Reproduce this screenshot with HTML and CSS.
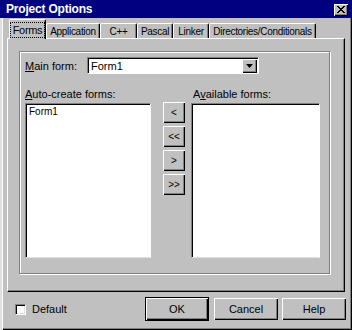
FILE: index.html
```html
<!DOCTYPE html>
<html>
<head>
    <meta charset="UTF-8">
    <title>Project Options</title>
    <link rel="stylesheet" href="styles.css">
</head>
<body>
    <div class="window">
        <div class="titlebar">
            <span class="title">Project Options</span>
            <span class="close">
                <svg width="8" height="7" viewBox="0 0 8 7"><path d="M0 0L7 7M1 0L8 7M7 0L0 7M8 0L1 7" stroke="#000" stroke-width="1"/></svg>
            </span>
        </div>

        <div class="tabs">
            <div class="tab active tab-forms"><span class="focus">Forms</span></div>
            <div class="tab tab-app">Application</div>
            <div class="tab tab-cpp">C++</div>
            <div class="tab tab-pascal">Pascal</div>
            <div class="tab tab-linker">Linker</div>
            <div class="tab tab-dirs">Directories/Conditionals</div>
        </div>

        <div class="panel">
            <div class="group">
                <div class="main-row">
                    <label class="main-label"><u>M</u>ain form:</label>
                    <div class="combo">
                        <span class="combo-text">Form1</span>
                        <span class="combo-btn">
                            <svg width="7" height="4" viewBox="0 0 7 4"><path d="M0 0H7L3.5 4Z" fill="#000"/></svg>
                        </span>
                    </div>
                </div>

                <div class="lists">
                    <label class="list-label"><u>A</u>uto-create forms:</label>
                    <span></span>
                    <label class="list-label">A<u>v</u>ailable forms:</label>

                    <div class="listbox">
                        <div class="list-item">Form1</div>
                    </div>
                    <div class="arrows">
                        <button class="btn arrow">&lt;</button>
                        <button class="btn arrow">&lt;&lt;</button>
                        <button class="btn arrow">&gt;</button>
                        <button class="btn arrow">&gt;&gt;</button>
                    </div>
                    <div class="listbox"></div>
                </div>
            </div>
        </div>

        <div class="footer">
            <label class="check"><span class="checkbox"></span>Default</label>
            <div class="buttons">
                <button class="btn default">OK</button>
                <button class="btn">Cancel</button>
                <button class="btn">Help</button>
            </div>
        </div>
    </div>
</body>
</html>
```

FILE: styles.css
```css
body {
    margin: 0;
    background: #c0c0c0;
    font-family: "Liberation Sans", Arial, sans-serif;
    font-size: 11px;
    color: #000;
}
.window {
    width: 352px;
    height: 330px;
    box-sizing: border-box;
    background: #c0c0c0;
    box-shadow: inset 2px 0 0 #dfdfdf, inset 3px 0 0 #fff, inset -1px -1px 0 #000, inset -2px -2px 0 #808080;
    overflow: hidden;
}
.titlebar {
    height: 18px;
    background: #000080;
    color: #fff;
    display: flex;
    align-items: center;
    justify-content: space-between;
    padding: 0 4px 0 6px;
}
.title {
    font-weight: bold;
    font-size: 12px;
    letter-spacing: -0.2px;
}
.close {
    width: 14px;
    height: 12px;
    margin-top: 1px;
    background: #c0c0c0;
    box-shadow: inset 1px 1px 0 #fff, inset -1px -1px 0 #000, inset -2px -2px 0 #808080;
    display: flex;
    align-items: center;
    justify-content: center;
}

.tabs {
    display: flex;
    align-items: flex-end;
    height: 19px;
    margin-top: 1px;
    padding-left: 9px;
}
.tab {
    height: 15px;
    box-sizing: border-box;
    border-top: 1px solid #fff;
    border-left: 1px solid #fff;
    border-right: 1px solid #000;
    border-radius: 2px 2px 0 0;
    box-shadow: inset -1px 0 0 #808080;
    display: flex;
    align-items: center;
    justify-content: center;
    white-space: nowrap;
    overflow: hidden;
    font-size: 10px;
    letter-spacing: -0.3px;
}
.tab.active {
    height: 20px;
    margin-bottom: -1px;
    position: relative;
    background: #c0c0c0;
    font-size: 11px;
}
.focus {
    outline: 1px dotted #000;
    padding: 1px 2px;
}
.tab-forms { width: 37px; }
.tab-app { width: 54px; }
.tab-cpp { width: 37px; }
.tab-pascal { width: 36px; }
.tab-linker { width: 36px; }
.tab-dirs { width: 107px; }

.panel {
    margin: 0 7px;
    height: 254px;
    box-sizing: border-box;
    border-top: 1px solid #fff;
    border-left: 1px solid #fff;
    border-right: 1px solid #000;
    border-bottom: 1px solid #000;
    box-shadow: inset -1px -1px 0 #808080;
    padding: 12px 0 0 11px;
}
.group {
    width: 311px;
    height: 223px;
    border: 1px solid #808080;
    box-shadow: 1px 1px 0 #fff, inset 1px 1px 0 #fff;
    padding: 5px 0 0 5px;
    box-sizing: border-box;
}

.main-row {
    display: flex;
    align-items: center;
}
.main-label {
    width: 62px;
}
.combo {
    width: 172px;
    height: 17px;
    box-sizing: border-box;
    background: #fff;
    border-top: 1px solid #808080;
    border-left: 1px solid #808080;
    border-right: 1px solid #fff;
    border-bottom: 1px solid #fff;
    box-shadow: inset 1px 1px 0 #000;
    display: flex;
    align-items: center;
    justify-content: space-between;
    padding: 1px 1px 0 3px;
}
.combo-btn {
    width: 15px;
    height: 14px;
    box-sizing: border-box;
    background: #c0c0c0;
    box-shadow: inset 1px 1px 0 #fff, inset -1px -1px 0 #000, inset -2px -2px 0 #808080;
    display: flex;
    align-items: center;
    justify-content: center;
}

.lists {
    display: grid;
    grid-template-columns: 126px 22px 127px;
    grid-template-rows: 15px 155px;
    column-gap: 10px;
    margin-top: 14px;
}
.lists .listbox:last-child {
    margin-left: -2px;
}
.list-label {
    align-self: start;
}
.listbox {
    background: #fff;
    box-sizing: border-box;
    border-top: 1px solid #808080;
    border-left: 1px solid #808080;
    border-right: 1px solid #fff;
    border-bottom: 1px solid #dfdfdf;
    box-shadow: inset 1px 1px 0 #000;
    padding: 2px 3px;
    font-size: 10px;
}
.arrows {
    display: flex;
    flex-direction: column;
    gap: 3px;
    margin-left: 2px;
    margin-top: -1px;
}
.btn {
    font-family: "Liberation Sans", Arial, sans-serif;
    font-size: 11px;
    color: #000;
    background: #c0c0c0;
    border: none;
    padding: 0;
    box-shadow: inset 1px 1px 0 #fff, inset -1px -1px 0 #000, inset -2px -2px 0 #808080;
}
.arrow {
    width: 22px;
    height: 21px;
    font-size: 10px;
}

.footer {
    display: flex;
    align-items: center;
    justify-content: space-between;
    padding: 6px 6px 0 15px;
}
.check {
    display: flex;
    align-items: center;
    gap: 6px;
}
.checkbox {
    width: 11px;
    height: 11px;
    box-sizing: border-box;
    background: #fff;
    border-top: 1px solid #808080;
    border-left: 1px solid #808080;
    border-right: 1px solid #fff;
    border-bottom: 1px solid #fff;
    box-shadow: inset 1px 1px 0 #000, inset -1px -1px 0 #dfdfdf;
}
.buttons {
    display: flex;
    gap: 4px;
}
.buttons .btn {
    width: 64px;
    height: 22px;
}
.buttons .btn.default {
    width: 62px;
    margin-right: 2px;
    box-shadow: 0 0 0 1px #000, inset 1px 1px 0 #fff, inset -1px -1px 0 #000, inset -2px -2px 0 #808080;
}
```
